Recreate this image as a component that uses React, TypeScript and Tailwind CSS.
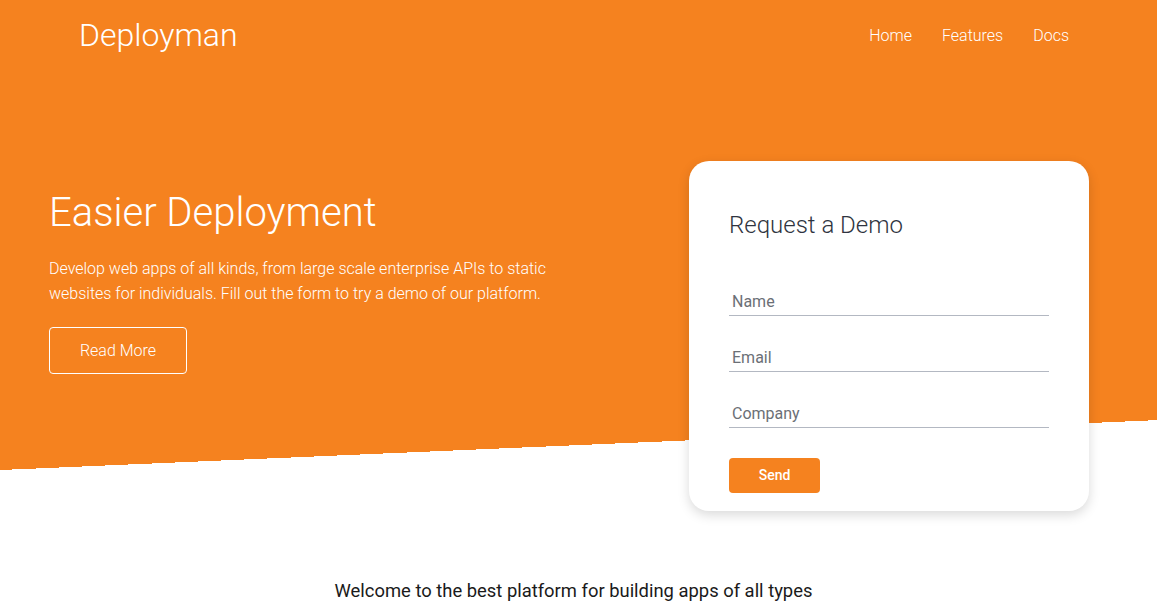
export default function App() {
  const font = { fontFamily: "Roboto, 'Noto Sans', sans-serif" };
  return (
    <div className="min-h-screen bg-white" style={font}>
      <div className="h-[520px] bg-[linear-gradient(177.53deg,#f5821f_469.6px,#ffffff_469.6px)]">
        <header className="h-[70px] flex items-center justify-between pl-[79px] pr-[88px] text-white">
          <div className="text-[32px] font-light leading-none">Deployman</div>
          <nav className="mt-[2px] flex items-center gap-[30px] text-[16px] font-light">
            <a href="#">Home</a>
            <a href="#">Features</a>
            <a href="#">Docs</a>
          </nav>
        </header>
        <div className="flex justify-between pl-[49px] pr-[68px] pt-[91px]">
          <div className="pt-[28px] text-white max-w-[520px]">
            <h1 className="text-[40px] font-light leading-[48px]">Easier Deployment</h1>
            <p className="mt-[19px] text-[16px] font-light leading-[25px]">
              Develop web apps of all kinds, from large scale enterprise APIs to static websites for individuals. Fill out the form to try a demo of our platform.
            </p>
            <button className="mt-[21px] h-[47px] w-[138px] rounded-[4px] border border-white text-[16px] font-light text-white">
              Read More
            </button>
          </div>
          <div className="w-[400px] h-[350px] rounded-[20px] bg-white shadow-[0_4px_12px_rgba(0,0,0,0.15)] px-[40px] pt-[49px]">
            <h2 className="text-[24px] font-light leading-[30px] text-[#2f3440]">Request a Demo</h2>
            <form className="mt-[48px] flex flex-col gap-[28px]" onSubmit={(e) => e.preventDefault()}>
              <input
                placeholder="Name"
                className="h-[28px] w-full border-b border-[#b3b8c2] px-[3px] text-[16px] text-[#555] placeholder:text-[#6b6f76] outline-none"
              />
              <input
                placeholder="Email"
                className="h-[28px] w-full border-b border-[#b3b8c2] px-[3px] text-[16px] text-[#555] placeholder:text-[#6b6f76] outline-none"
              />
              <input
                placeholder="Company"
                className="h-[28px] w-full border-b border-[#b3b8c2] px-[3px] text-[16px] text-[#555] placeholder:text-[#6b6f76] outline-none"
              />
              <button className="mt-[2px] h-[35px] w-[91px] rounded-[4px] bg-[#f5821f] text-[14px] font-medium text-white">
                Send
              </button>
            </form>
          </div>
        </div>
      </div>
      <section className="pt-[59px] pr-[10px] text-center">
        <h3 className="text-[18.4px] leading-[24px] text-[#1a1a1a]">Welcome to the best platform for building apps of all types</h3>
        <p className="mt-[6px] text-[18px] text-[#777]">Deploy, manage and scale your applications with just a few clicks</p>
      </section>
    </div>
  );
}
